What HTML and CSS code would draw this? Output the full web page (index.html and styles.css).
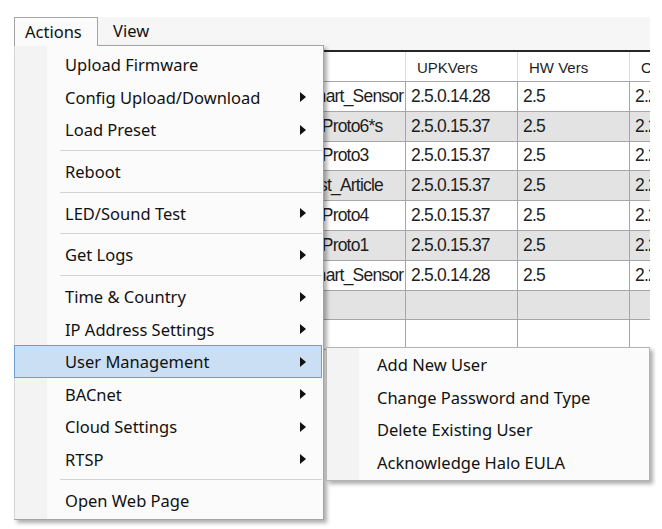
FILE: index.html
```html
<!DOCTYPE html>
<html>
<head>
<meta charset="utf-8">
<link rel="stylesheet" href="styles.css">
</head>
<body>
<div class="screen">
  <div class="band">
    <div class="menubar">
      <div class="tab active">Actions</div>
      <div class="tab view">View</div>
    </div>
  </div>

  <div class="grid">
    <div class="row head">
      <div class="cell"></div>
      <div class="cell">UPKVers</div>
      <div class="cell">HW Vers</div>
      <div class="cell">OS Vers</div>
    </div>
    <div class="row">
      <div class="cell">Smart_Sensor</div><div class="cell">2.5.0.14.28</div><div class="cell">2.5</div><div class="cell">2.2.1</div>
    </div>
    <div class="row alt">
      <div class="cell">H_Proto6*s</div><div class="cell">2.5.0.15.37</div><div class="cell">2.5</div><div class="cell">2.2.1</div>
    </div>
    <div class="row">
      <div class="cell">H_Proto3</div><div class="cell">2.5.0.15.37</div><div class="cell">2.5</div><div class="cell">2.2.1</div>
    </div>
    <div class="row alt">
      <div class="cell">First_Article</div><div class="cell">2.5.0.15.37</div><div class="cell">2.5</div><div class="cell">2.2.1</div>
    </div>
    <div class="row">
      <div class="cell">H_Proto4</div><div class="cell">2.5.0.15.37</div><div class="cell">2.5</div><div class="cell">2.2.1</div>
    </div>
    <div class="row alt">
      <div class="cell">H_Proto1</div><div class="cell">2.5.0.15.37</div><div class="cell">2.5</div><div class="cell">2.2.1</div>
    </div>
    <div class="row">
      <div class="cell">Smart_Sensor</div><div class="cell">2.5.0.14.28</div><div class="cell">2.5</div><div class="cell">2.2.1</div>
    </div>
    <div class="row alt">
      <div class="cell"></div><div class="cell"></div><div class="cell"></div><div class="cell"></div>
    </div>
    <div class="row">
      <div class="cell"></div><div class="cell"></div><div class="cell"></div><div class="cell"></div>
    </div>
  </div>

  <div class="menu main">
    <div class="item">Upload Firmware</div>
    <div class="item">Config Upload/Download<span class="arrow"></span></div>
    <div class="item">Load Preset<span class="arrow"></span></div>
    <div class="sep"></div>
    <div class="item">Reboot</div>
    <div class="sep"></div>
    <div class="item">LED/Sound Test<span class="arrow"></span></div>
    <div class="sep"></div>
    <div class="item">Get Logs<span class="arrow"></span></div>
    <div class="sep"></div>
    <div class="item">Time &amp; Country<span class="arrow"></span></div>
    <div class="item">IP Address Settings<span class="arrow"></span></div>
    <div class="item hot">User Management<span class="arrow"></span></div>
    <div class="item">BACnet<span class="arrow"></span></div>
    <div class="item">Cloud Settings<span class="arrow"></span></div>
    <div class="item">RTSP<span class="arrow"></span></div>
    <div class="sep"></div>
    <div class="item">Open Web Page</div>
  </div>

  <div class="menu sub">
    <div class="item">Add New User</div>
    <div class="item">Change Password and Type</div>
    <div class="item">Delete Existing User</div>
    <div class="item">Acknowledge Halo EULA</div>
  </div>
</div>
</body>
</html>
```

FILE: styles.css
```css
html, body {
  margin: 0;
  padding: 0;
  background: #ffffff;
}

.screen {
  position: relative;
  width: 662px;
  height: 529px;
  overflow: hidden;
  background: #ffffff;
}

/* top menu strip */
.band {
  margin: 17px 0 0 14px;
  width: 636px;
  height: 33px;
  background: #f6f6f6;
}

.menubar {
  display: flex;
  height: 28px;
  font-family: "Noto Sans", "DejaVu Sans", sans-serif;
  font-size: 16.5px;
  color: #111111;
}

.tab {
  display: flex;
  align-items: center;
  padding: 0 11px 1px 11px;
  box-sizing: border-box;
  height: 28px;
}

.tab.active {
  position: relative;
  z-index: 5;
  width: 84px;
  height: 29px;
  padding-left: 10px;
  padding-bottom: 2px;
  background: #fbfbfb;
  border: 1px solid #a4a4a4;
  border-bottom: none;
}

.tab.view {
  padding-left: 15px;
}

/* data grid */
.grid {
  margin-left: 296px;
  width: 354px;
  overflow: hidden;
  border-top: 2px solid #262626;
  background: #ffffff;
}

.row {
  display: grid;
  grid-template-columns: 110px 112px 112px 60px;
  height: 29.8px;
  box-sizing: border-box;
  border-bottom: 1px solid #a6a6a6;
  font-family: "Liberation Sans", Arial, sans-serif;
  font-size: 17.5px;
  letter-spacing: -0.8px;
  color: #1e1e1e;
  background: #ffffff;
}

.row.alt {
  background: #e3e3e3;
}

.row.head {
  height: 30px;
  font-size: 15px;
  letter-spacing: 0;
  color: #1e1e1e;
}

.cell {
  display: flex;
  align-items: center;
  padding-left: 5px;
  border-right: 1px solid #a6a6a6;
  white-space: nowrap;
  overflow: hidden;
}

.row.head .cell {
  padding-left: 11px;
  padding-top: 1px;
  border-right-color: #dcdcdc;
}

/* popup menus */
.menu {
  position: absolute;
  box-sizing: border-box;
  background: linear-gradient(to right, #f3f3f3 0, #f3f3f3 32px, #fbfbfb 32px);
  border: 1px solid #a4a4a4;
  box-shadow: 3px 3px 4px rgba(0, 0, 0, 0.32);
  font-family: "Noto Sans", "DejaVu Sans", sans-serif;
  font-size: 16.5px;
  color: #111111;
}

.menu.main {
  left: 14px;
  top: 45px;
  width: 310px;
  padding: 2.25px 0 1.5px 0;
  border-left-color: #d6d6d6;
  z-index: 3;
}

.menu.sub {
  left: 326px;
  top: 347px;
  width: 324px;
  padding: 0.5px 0 1.5px 0;
  border-color: #b4b4b4;
  z-index: 4;
}

.item {
  display: flex;
  align-items: center;
  height: 32.5px;
  box-sizing: border-box;
  padding: 0 17px 0 50px;
  white-space: nowrap;
}

.item.hot {
  margin: 0 1px 0 -1px;
  padding: 0 15px 0 50px;
  background: #cadff4;
  border: 1px solid #6d9dd2;
}

.arrow {
  margin-left: auto;
  width: 0;
  height: 0;
  border-left: 6px solid #111111;
  border-top: 5px solid transparent;
  border-bottom: 5px solid transparent;
}

.sep {
  display: flex;
  align-items: center;
  height: 9.25px;
  padding: 0 1px 0 45px;
}

.sep::after {
  content: "";
  flex: 1;
  height: 1px;
  background: #d4d4d4;
}
```
